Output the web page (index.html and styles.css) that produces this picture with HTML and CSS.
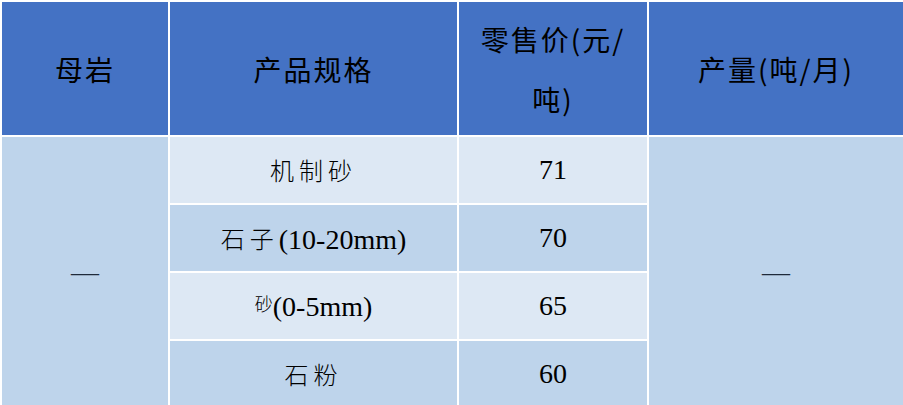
FILE: index.html
```html
<!DOCTYPE html>
<html lang="zh-CN">
<head>
<meta charset="utf-8">
<title>价格表</title>
<link rel="stylesheet" href="styles.css">
</head>
<body>
<table class="price-table">
  <colgroup>
    <col class="col-rock">
    <col class="col-spec">
    <col class="col-price">
    <col class="col-output">
  </colgroup>
  <thead>
    <tr class="head-row">
      <th>母岩</th>
      <th>产品规格</th>
      <th class="wrap">零售价(元/<br>吨)</th>
      <th>产量(吨/月)</th>
    </tr>
  </thead>
  <tbody>
    <tr class="band-light">
      <td class="merged" rowspan="4"><span class="dash">—</span></td>
      <td class="spec"><span class="zh">机制砂</span></td>
      <td class="num">71</td>
      <td class="merged" rowspan="4"><span class="dash">—</span></td>
    </tr>
    <tr class="band-dark">
      <td class="spec"><span class="zh">石子</span>(10-20mm)</td>
      <td class="num">70</td>
    </tr>
    <tr class="band-light">
      <td class="spec"><span class="zh small">砂</span>(0-5mm)</td>
      <td class="num">65</td>
    </tr>
    <tr class="band-dark">
      <td class="spec"><span class="zh">石粉</span></td>
      <td class="num">60</td>
    </tr>
  </tbody>
</table>
</body>
</html>
```
FILE: styles.css
```css
html, body {
  margin: 0;
  padding: 0;
  background: #ffffff;
}

.price-table {
  width: 903px;
  height: 405px;
  border-collapse: collapse;
  table-layout: fixed;
  font-family: "Liberation Serif", "Noto Sans CJK SC", serif;
  color: #000;
}

.col-rock { width: 168px; }
.col-spec { width: 289px; }
.col-price { width: 190px; }
.col-output { width: 256px; }

.price-table th,
.price-table td {
  border: 2px solid #ffffff;
  text-align: center;
  vertical-align: middle;
  padding: 0;
}

.head-row {
  height: 135px;
}

.head-row th {
  background: #4472c4;
  font-family: "Noto Sans CJK SC", sans-serif;
  font-weight: 400;
  font-size: 28px;
  letter-spacing: 2px;
  line-height: 60px;
}

.price-table tbody tr {
  height: 68px;
}

.band-light td {
  background: #dde8f4;
}

.band-dark td,
.price-table td.merged {
  background: #bed4eb;
}

.spec {
  font-size: 28px;
}

.zh {
  font-family: "Noto Sans CJK SC", sans-serif;
  font-weight: 300;
  font-size: 24px;
  letter-spacing: 5px;
  vertical-align: 1px;
}

.zh.small {
  font-size: 18px;
  letter-spacing: 0;
  vertical-align: 5px;
}

.num {
  font-size: 28px;
}

.dash {
  font-family: "Liberation Serif", serif;
  font-size: 28px;
  color: #1f2a3a;
}
```
